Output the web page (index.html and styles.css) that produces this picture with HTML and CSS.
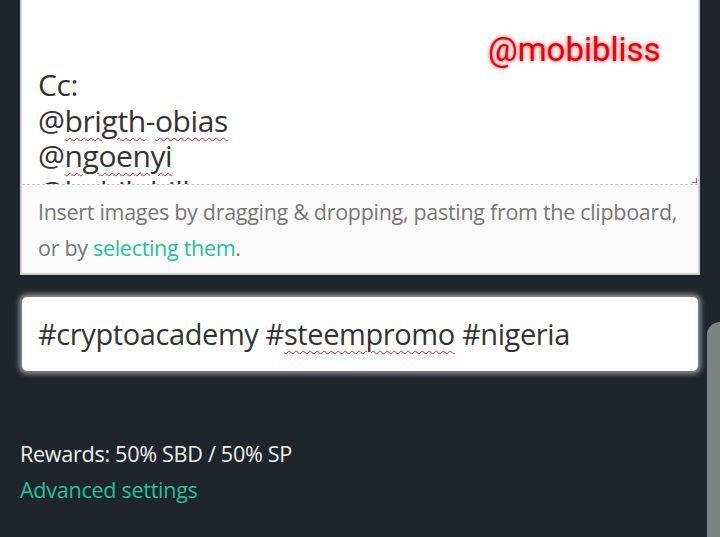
FILE: index.html
```html
<!DOCTYPE html>
<html>
<head>
<meta charset="utf-8">
<link rel="stylesheet" href="styles.css">
</head>
<body>
<div class="page">
  <div class="editor">
    <div class="body-area">
      <div class="lines">
        <div class="line">Cc:</div>
        <div class="line">@<span class="sp">brigth</span>-<span class="sp">obias</span></div>
        <div class="line">@<span class="sp">ngoenyi</span></div>
        <div class="line">@<span class="sp">bobilobill</span></div>
      </div>
      <div class="watermark">@mobibliss</div>
      <span class="grip"></span>
    </div>
    <div class="dropzone">
      Insert images by dragging &amp; dropping, pasting from the clipboard, or by <a class="link">selecting them</a>.
    </div>
  </div>
  <div class="tags"><span class="tag-text">#cryptoacademy #<span class="sp">steempromo</span> #nigeria</span></div>
  <div class="meta">
    <div class="rewards">Rewards: 50% SBD / 50% SP</div>
    <div class="advanced">Advanced settings</div>
  </div>
  <div class="scroll-thumb"></div>
</div>
</body>
</html>
```
FILE: styles.css
```css
html, body {
  margin: 0;
  padding: 0;
  background: #1f252c;
  width: 720px;
  height: 537px;
  overflow: hidden;
}
.page {
  position: relative;
  height: 537px;
  box-sizing: border-box;
  padding: 0 20px;
  overflow: hidden;
  font-family: "Open Sans", "Liberation Sans", sans-serif;
}
.editor {
  width: 676px;
  border: 2px solid #cfcfcf;
  border-top: 0;
  background: #fafafa;
}
.body-area {
  position: relative;
  height: 184px;
  background: #fff;
  border-bottom: 1px dashed #c8c8c8;
  overflow: hidden;
}
.lines {
  padding: 67px 0 0 16px;
  font-size: 30px;
  line-height: 35.5px;
  color: #333;
  letter-spacing: -0.4px;
}
.sp {
  text-decoration: underline wavy #e02020;
  text-decoration-thickness: 1px;
  text-underline-offset: 5px;
}
.watermark {
  position: absolute;
  left: 466px;
  top: 30px;
  font-family: Roboto, sans-serif;
  font-size: 33px;
  color: #e8000b;
  text-shadow: 0 0 3px rgba(255, 40, 40, 0.7), 0 0 6px rgba(255, 80, 80, 0.4);
}
.grip {
  position: absolute;
  right: 1px;
  bottom: 1px;
  width: 4px;
  height: 4px;
  border-right: 1px solid #777;
  border-bottom: 1px solid #777;
}
.dropzone {
  padding: 9px 6px 7px 16px;
  font-size: 21.5px;
  line-height: 36px;
  color: #777;
  letter-spacing: -0.3px;
}
.link {
  color: #1fc29a;
}
.tags {
  margin-top: 22px;
  margin-left: 2px;
  width: 676px;
  height: 74px;
  box-sizing: border-box;
  padding: 0 16px 2px;
  display: flex;
  align-items: center;
  background: #fff;
  border-radius: 5px;
  box-shadow: 0 0 5px 3px rgba(230, 230, 230, 0.55);
  font-size: 29px;
  color: #333;
  letter-spacing: -0.4px;
}
.meta {
  margin-top: 65px;
  font-size: 21.6px;
  line-height: 36px;
  letter-spacing: -0.3px;
}
.rewards {
  color: #f2f2f2;
}
.advanced {
  color: #1fc29a;
}
.scroll-thumb {
  position: absolute;
  left: 707px;
  top: 322px;
  width: 13px;
  height: 215px;
  border-radius: 20px 0 0 0;
  background: #7c8186;
}
```
